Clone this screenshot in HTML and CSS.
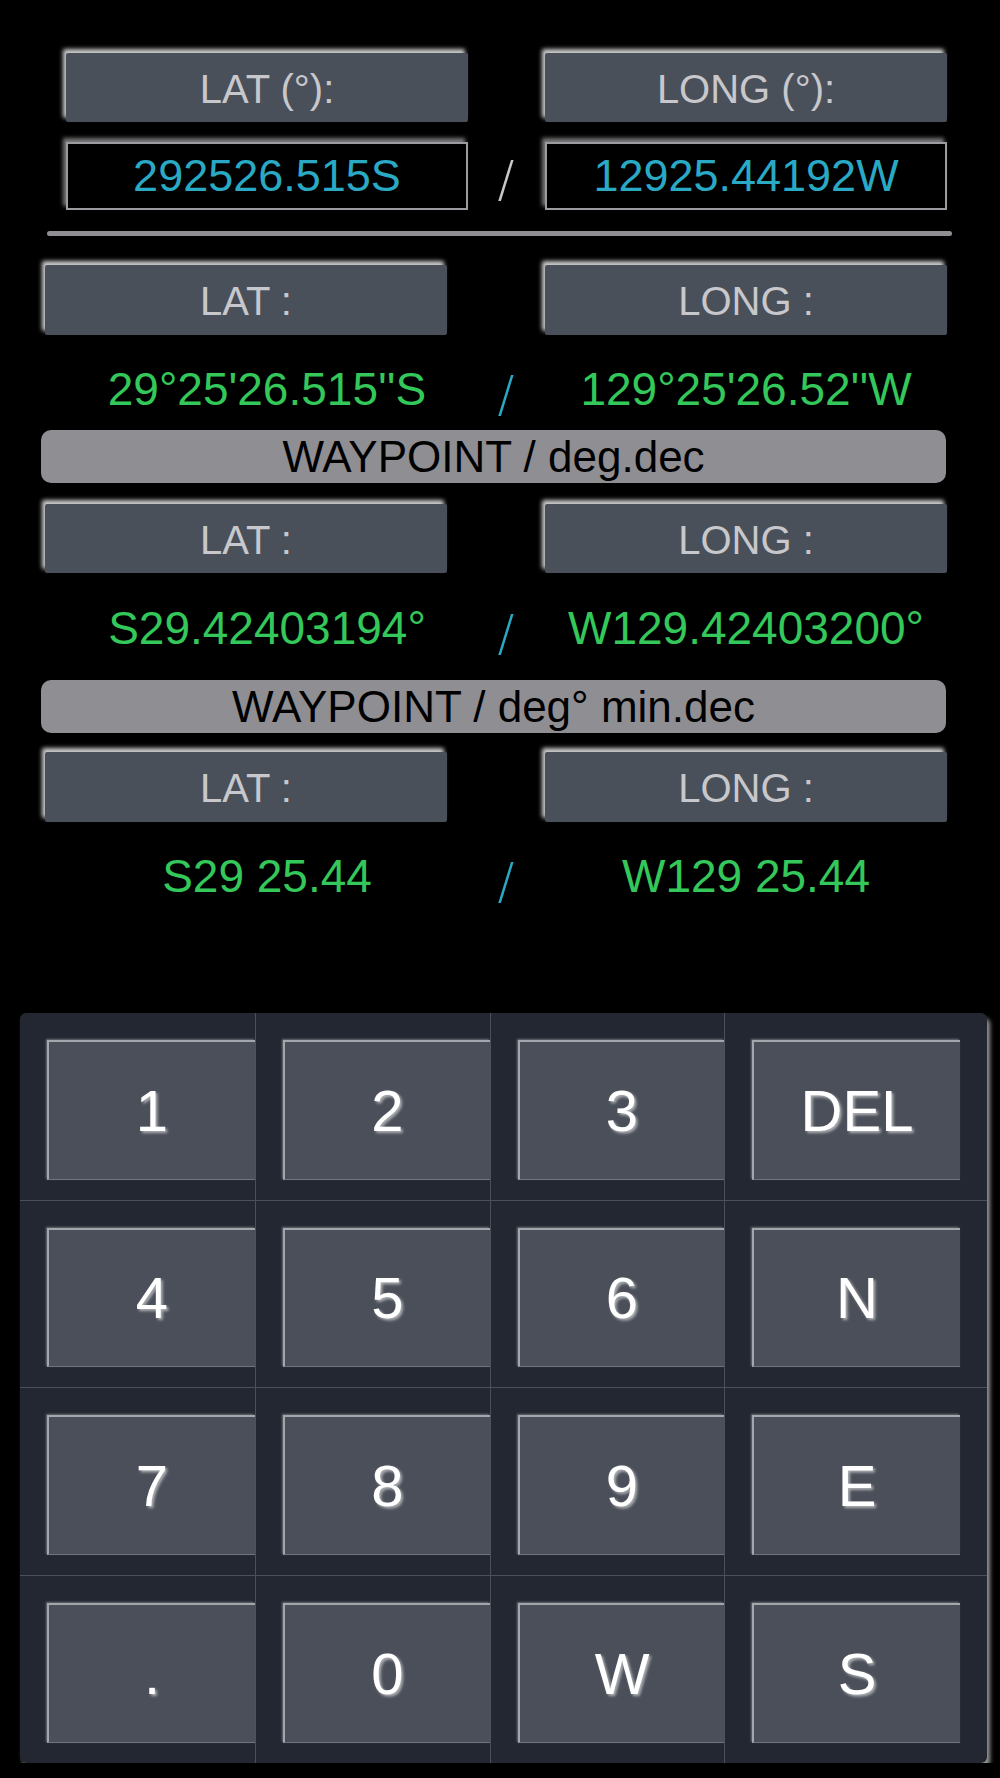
FILE: index.html
```html
<!DOCTYPE html>
<html>
<head>
    <title>Waypoint Converter</title>
    <link rel="stylesheet" href="styles.css">
</head>
<body>
    <div class="screen">
        <div class="pair label-row top-row">
            <div class="label-box">LAT (°):</div>
            <div></div>
            <div class="label-box">LONG (°):</div>
        </div>
        <div class="pair entry-row">
            <div class="entry">292526.515S</div>
            <div class="slash plain">/</div>
            <div class="entry">12925.44192W</div>
        </div>
        <div class="divider"></div>

        <div class="pair label-row row-a">
            <div class="label-box shifted">LAT :</div>
            <div></div>
            <div class="label-box">LONG :</div>
        </div>
        <div class="pair value-row">
            <div class="value">29°25'26.515''S</div>
            <div class="slash">/</div>
            <div class="value">129°25'26.52''W</div>
        </div>

        <div class="waypoint-bar">WAYPOINT / deg.dec</div>
        <div class="pair label-row row-b">
            <div class="label-box shifted">LAT :</div>
            <div></div>
            <div class="label-box">LONG :</div>
        </div>
        <div class="pair value-row value-b">
            <div class="value">S29.42403194°</div>
            <div class="slash">/</div>
            <div class="value">W129.42403200°</div>
        </div>

        <div class="waypoint-bar second">WAYPOINT / deg° min.dec</div>
        <div class="pair label-row row-c">
            <div class="label-box shifted">LAT :</div>
            <div></div>
            <div class="label-box">LONG :</div>
        </div>
        <div class="pair value-row">
            <div class="value">S29 25.44</div>
            <div class="slash">/</div>
            <div class="value">W129 25.44</div>
        </div>

        <div class="keypad">
            <div class="key-cell"><button class="key">1</button></div>
            <div class="key-cell"><button class="key">2</button></div>
            <div class="key-cell"><button class="key">3</button></div>
            <div class="key-cell"><button class="key">DEL</button></div>
            <div class="key-cell"><button class="key">4</button></div>
            <div class="key-cell"><button class="key">5</button></div>
            <div class="key-cell"><button class="key">6</button></div>
            <div class="key-cell"><button class="key">N</button></div>
            <div class="key-cell"><button class="key">7</button></div>
            <div class="key-cell"><button class="key">8</button></div>
            <div class="key-cell"><button class="key">9</button></div>
            <div class="key-cell"><button class="key">E</button></div>
            <div class="key-cell"><button class="key">.</button></div>
            <div class="key-cell"><button class="key">0</button></div>
            <div class="key-cell"><button class="key">W</button></div>
            <div class="key-cell"><button class="key">S</button></div>
        </div>
    </div>
</body>
</html>
```

FILE: styles.css
```css
body {
    margin: 0;
    background-color: #000;
    font-family: "Helvetica Neue", Helvetica, "Liberation Sans", Arial, sans-serif;
}
.screen {
    padding-top: 53px;
}
.pair {
    display: grid;
    grid-template-columns: 440px 38px 442px;
    grid-template-rows: 100%;
    margin-left: 47px;
}
.label-row {
    height: 69px;
}
.row-a {
    margin-top: 29px;
    height: 70px;
}
.row-b {
    margin-top: 21px;
}
.row-c {
    margin-top: 19px;
    height: 70px;
}
.label-box {
    width: 402px;
    justify-self: center;
    display: flex;
    align-items: center;
    justify-content: center;
    padding-top: 3px;
    box-sizing: border-box;
    background-color: #4a505a;
    color: #c8c8cc;
    font-size: 40px;
    border-radius: 2px;
    box-shadow: -3px -4px 4px rgba(240, 240, 240, 0.85);
}
.label-box.shifted {
    justify-self: start;
    margin-left: -2px;
}
.entry-row {
    margin-top: 20px;
    height: 68px;
}
.entry {
    width: 402px;
    justify-self: center;
    box-sizing: border-box;
    display: flex;
    align-items: center;
    justify-content: center;
    border: 2px solid #9c9ca0;
    background-color: #000;
    color: #2aa9c4;
    font-size: 45px;
    box-shadow: -3px -4px 4px rgba(200, 200, 200, 0.6);
}
.slash {
    display: flex;
    align-items: center;
    justify-content: center;
    padding-top: 10px;
    color: #2aa9c4;
    font-family: "DejaVu Sans", sans-serif;
    font-size: 50px;
    font-weight: 200;
    line-height: 1;
}
.slash.plain {
    color: #c8c8cc;
    padding-top: 6px;
}
.divider {
    margin: 21px 0 0 47px;
    width: 905px;
    height: 5px;
    border-radius: 3px;
    background-color: #8e8e93;
}
.value-row {
    margin-top: 27px;
    height: 54px;
}
.value-b {
    margin-top: 28px;
}
.value {
    display: flex;
    align-items: center;
    justify-content: center;
    color: #34c759;
    font-size: 46px;
    white-space: nowrap;
}
.waypoint-bar {
    margin: 14px 0 0 41px;
    width: 905px;
    height: 53px;
    border-radius: 10px;
    background-color: #8e8e93;
    color: #000;
    font-size: 44px;
    display: flex;
    align-items: center;
    justify-content: center;
}
.waypoint-bar.second {
    margin-top: 25px;
}

/* keypad */
.keypad {
    margin: 110px 0 0 20px;
    width: 967px;
    height: 750px;
    display: grid;
    grid-template-columns: 236px 235px 234px 1fr;
    grid-template-rows: repeat(4, 1fr);
    background-color: #222731;
    border-radius: 6px;
    box-shadow: 3px 5px 4px rgba(190, 190, 190, 0.8);
}
.key-cell {
    box-sizing: border-box;
    padding: 27px 0 20px 27px;
    border-right: 1px solid #4a505a;
    border-bottom: 1px solid #4a505a;
}
.key-cell:nth-child(4n) {
    border-right: none;
    padding-right: 27px;
}
.key-cell:nth-last-child(-n+4) {
    border-bottom: none;
}
.key {
    width: 100%;
    height: 100%;
    box-sizing: border-box;
    padding: 0;
    background-color: #4a4f59;
    border: none;
    border-top: 2px solid #a3a7ad;
    border-left: 2px solid #a3a7ad;
    border-bottom: 1px solid #6e737c;
    box-shadow: -1px -1px 2px rgba(220, 220, 220, 0.4);
    font-family: inherit;
    font-size: 58px;
    color: #fff;
    text-shadow: 2px 2px 3px rgba(230, 230, 230, 0.65);
    cursor: pointer;
}
```
